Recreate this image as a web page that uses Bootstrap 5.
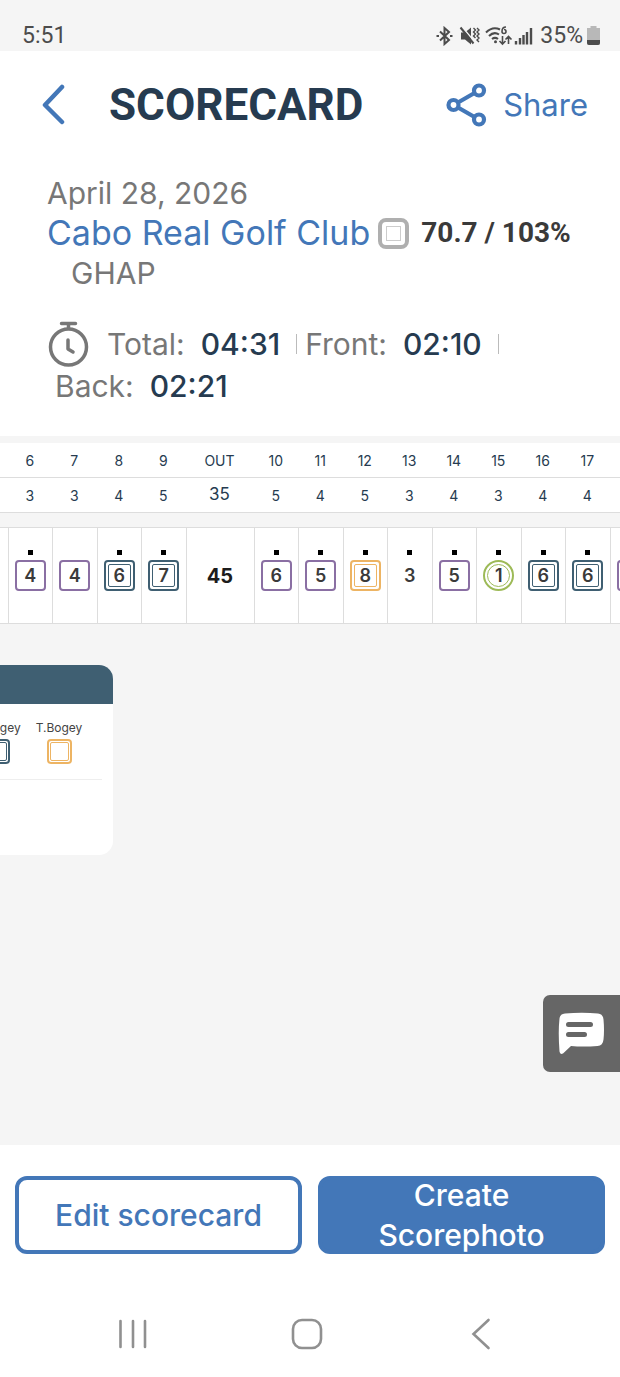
<!DOCTYPE html>
<html lang="en">
<head>
<meta charset="utf-8">
<meta name="viewport" content="width=device-width, initial-scale=1">
<title>Scorecard</title>
<link href="https://cdn.jsdelivr.net/npm/bootstrap@5.3.0/dist/css/bootstrap.min.css" rel="stylesheet">
<style>
:root { --blue:#4377b8; --navy:#263b50; --steel:#3f5f72; --purple:#8a6fa3; --amber:#edb463; --green:#9dba57; --haze:#f5f5f5; }
body { font-family: Inter, "Noto Sans", sans-serif; color: #777; background: #fff; }
svg { display: block; flex: none; }
button { font-family: inherit; }
.status-bar { height: 51px; padding: 20px 20px 0 22px; background: var(--haze); color: #4c4c4c; font: 400 23px/32px Roboto, sans-serif; }
.top-bar { padding: 24px 32px 24px 40px; height: 108px; }
.plain-btn { border: 0; padding: 0; background: none; color: var(--blue); }
.page-title { font: 700 44px/60px Roboto, sans-serif; color: var(--navy); margin: 0 0 0 42px; }
.share { font-size: 31px; line-height: 40px; }
.round-info { padding: 14px 47px 29px; font-size: 30px; line-height: 40px; }
.club { font-size: 34px; color: var(--blue); text-decoration: none; }
.tee { flex: none; width: 31px; height: 31px; border: 4px solid #afafaf; border-radius: 8px; padding: 4px; }
.tee::before { content: ""; display: block; height: 100%; border: 1px solid #ccc; }
.rating { font: 700 28px/40px Roboto, sans-serif; color: #3a3a3a; }
.times { padding-top: 30px; line-height: 42px; }
.times svg { margin: -2px 0; }
.times b { font-weight: 500; color: var(--navy); }
.bar { width: 1px; height: 20px; background: #bbb; }
.scroller { overflow: hidden; background: var(--haze); padding-top: 7px; }
.score-table { table-layout: fixed; width: calc(100% + 71px); margin-left: -37px; border-collapse: separate; border-spacing: 0; text-align: center; color: var(--navy); font-size: 14px; }
.score-table th, .score-table td { padding: 0; font-weight: 400; background: #fff; }
.score-table .total { width: 68px; }
.line-row > * { height: 35px; border-bottom: 1px solid #ddd; }
.line-row .sum { font-size: 17px; }
.score-table .gap-row td { height: 14px; background: var(--haze); }
.score-row > td { height: 97px; border: solid #ddd; border-width: 1px 0 1px 1px; vertical-align: top; }
.score-row .sum { font-size: 20px; font-weight: 700; color: #1c1c1c; vertical-align: middle; }
.dot { width: 5px; height: 5px; margin: 22px auto 5px; }
.dot.on { background: #000; }
.mark-box { display: block; width: 31px; height: 31px; margin: 0 auto; padding: 2px; border: 2px solid transparent; border-radius: 4px; font: 600 18px/21px Inter, sans-serif; color: #3a3a3a; }
.mark-box > span { display: block; height: 100%; border: 1px solid transparent; border-radius: 2px; }
.mark-box.bogey { border-color: var(--purple); }
.mark-box.double, .mark-box.double > span { border-color: var(--steel); }
.mark-box.triple, .mark-box.triple > span { border-color: var(--amber); }
.mark-box.eagle, .mark-box.eagle > span { border-color: var(--green); border-radius: 50%; }
.mark-box.small-box { width: 25px; height: 25px; padding: 1px; }
.board { background: var(--haze); padding-top: 41px; position: relative; }
.legend { width: 113px; height: 190px; border-radius: 0 14px 14px 0; background: #fff; overflow: hidden; }
.legend-head { height: 39px; background: var(--steel); }
.legend-items { margin-right: 11px; padding: 17px 12px 15px 0; border-bottom: 1px solid #eee; font-size: 12px; line-height: 14px; color: #444; }
.legend-items > div { flex: 0 0 62px; text-align: center; }
.legend-items .mark-box { margin-top: 4px; }
.chat { position: absolute; right: 0; bottom: 73px; width: 77px; height: 77px; border: 0; border-radius: 7px 0 0 7px; background: #666; padding: 17px 15px; }
.actions { padding: 31px 15px 0; }
.actions .btn { height: 78px; border: 4px solid var(--blue); border-radius: 12px; padding: 0; font-size: 30px; line-height: 40px; font-weight: 500; color: var(--blue); }
.actions .btn.solid { background: var(--blue); color: #fff; }
.sys-nav { padding: 60px 6px 23px 0; height: 123px; }
.sys-nav button { flex: 0 0 174px; display: flex; justify-content: center; }
</style>
</head>
<body>
<div class="d-flex flex-column min-vh-100">
  <div class="status-bar d-flex align-items-center">
    <span class="me-auto">5:51</span>
    <svg width="100" height="20" viewBox="0 0 100 20" fill="none" stroke="#4c4c4c" stroke-width="2" class="me-1">
      <path d="M4 5.500l9 8.500-4.500 4V2L13 6l-9 8.500M.5 10H3M14 10h2.500"/>
      <path d="M25 6.500h4l6-5v17l-6-5h-4z" fill="#4c4c4c" stroke="none"/>
      <path d="M26.500 1.500l12 14" stroke="#f5f5f5" stroke-width="1.500"/><path d="M24.500 1.500l13 16"/>
      <path d="M37.500 2l2 2-2 2 2 2-2 2 2 2M41 2l2 2-2 2 2 2-2 2 2 2-2 2 2 2" stroke-width="1.400"/>
      <path d="M50 6.500c5-5 10-5 14-3M53 10c3-3 7-3.500 10-1.500M56 13c2-1.500 4-1.500 6 0"/>
      <circle cx="59.500" cy="15.800" r="1.500" fill="#4c4c4c" stroke="none"/>
      <path d="M70 1c-3 0-4 2-4 4.500a2 2 0 1 0 2-2M66.500 10v7.500m-3-2.500l3 3 3-3M72.500 18v-7.500m-3 3l3-3 3 3" stroke-width="1.600"/>
      <path d="M80 15v3.500M84 12v6.500M87.500 9v9.500M91 6v12.500M95 2v16.500" stroke-width="2.400"/>
    </svg>
    <span>35%</span>
    <svg width="13" height="19" viewBox="0 0 13 19" class="ms-1"><path d="M3.500 0h6v2H13v15a2 2 0 0 1-2 2H2a2 2 0 0 1-2-2V2h3.500z" fill="#b8b8b8"/><path d="M0 14h13v3a2 2 0 0 1-2 2H2a2 2 0 0 1-2-2z" fill="#4c4c4c"/></svg>
  </div>

  <header class="top-bar d-flex align-items-center">
    <button class="plain-btn" aria-label="Back"><svg width="27" height="42" viewBox="0 0 27 42"><path d="M22 3L5 21l17 17" fill="none" stroke="#4377b8" stroke-width="4.500" stroke-linecap="round" stroke-linejoin="round"/></svg></button>
    <h1 class="page-title me-auto">SCORECARD</h1>
    <button class="plain-btn share d-flex align-items-center gap-3">
      <svg width="41" height="44" viewBox="0 0 41 44" fill="none" stroke="#4377b8" stroke-width="4.200"><circle cx="7.500" cy="22" r="5"/><circle cx="33" cy="7.500" r="5"/><circle cx="33" cy="36.500" r="5"/><path d="M12 19.500L28.500 10M12 24.500L28.500 34"/></svg>
      <span>Share</span>
    </button>
  </header>

  <section class="round-info">
    <div>April 28, 2026</div>
    <div class="d-flex align-items-center">
      <a href="#" class="club text-nowrap">Cabo Real Golf Club</a>
      <span class="tee ms-2"></span>
      <span class="rating text-nowrap ms-2 ps-1">70.7 / 103%</span>
    </div>
    <div class="ps-4">GHAP</div>
    <div class="times d-flex flex-wrap align-items-center">
      <svg width="44" height="46" viewBox="0 0 44 46" fill="none" stroke="#777" stroke-width="3.500" stroke-linecap="round"><circle cx="21.500" cy="26" r="18"/><path d="M14.500 2.500h14M21.500 3v4M21 19v9l5 3" stroke-linejoin="round"/></svg>
      <span class="ms-3 me-3">Total:</span><b>04:31</b><span class="bar ms-3 me-2"></span>
      <span class="me-3">Front:</span><b>02:10</b><span class="bar ms-3"></span>
      <div class="w-100 ps-2"><span class="me-3">Back:</span><b>02:21</b></div>
    </div>
  </section>

  <div class="scroller">
    <table class="score-table">
      <thead>
        <tr class="line-row"><th></th><th>6</th><th>7</th><th>8</th><th>9</th><th class="total">OUT</th><th>10</th><th>11</th><th>12</th><th>13</th><th>14</th><th>15</th><th>16</th><th>17</th><th></th></tr>
      </thead>
      <tbody>
        <tr class="line-row"><td></td><td>3</td><td>3</td><td>4</td><td>5</td><td class="sum">35</td><td>5</td><td>4</td><td>5</td><td>3</td><td>4</td><td>3</td><td>4</td><td>4</td><td></td></tr>
        <tr class="gap-row"><td colspan="15"></td></tr>
        <tr class="score-row">
          <td></td>
          <td><div class="dot on"></div><span class="mark-box bogey"><span>4</span></span></td>
          <td><div class="dot"></div><span class="mark-box bogey"><span>4</span></span></td>
          <td><div class="dot on"></div><span class="mark-box double"><span>6</span></span></td>
          <td><div class="dot on"></div><span class="mark-box double"><span>7</span></span></td>
          <td class="sum">45</td>
          <td><div class="dot on"></div><span class="mark-box bogey"><span>6</span></span></td>
          <td><div class="dot on"></div><span class="mark-box bogey"><span>5</span></span></td>
          <td><div class="dot on"></div><span class="mark-box triple"><span>8</span></span></td>
          <td><div class="dot on"></div><span class="mark-box"><span>3</span></span></td>
          <td><div class="dot on"></div><span class="mark-box bogey"><span>5</span></span></td>
          <td><div class="dot on"></div><span class="mark-box eagle"><span>1</span></span></td>
          <td><div class="dot on"></div><span class="mark-box double"><span>6</span></span></td>
          <td><div class="dot on"></div><span class="mark-box double"><span>6</span></span></td>
          <td><div class="dot"></div><span class="mark-box bogey"><span></span></span></td>
        </tr>
      </tbody>
    </table>
  </div>

  <main class="board flex-grow-1">
    <div class="legend">
      <div class="legend-head"></div>
      <div class="legend-items d-flex justify-content-end">
        <div>D.Bogey<span class="mark-box small-box double"><span></span></span></div>
        <div>T.Bogey<span class="mark-box small-box triple"><span></span></span></div>
      </div>
    </div>
    <button class="chat" aria-label="Chat"><svg width="47" height="43" viewBox="0 0 47 43"><path d="M7 1.500Q24 0 40 1.500q5 .5 5.500 6 1 11 0 20-.5 6-6 6.500Q25 35 13 34L5 41.500q-3 1.500-3.500-2Q0 20 1.500 6.500 2 2 7 1.500z" fill="#fff"/><path d="M10.500 12.500h22M10.500 22.500h16" stroke="#666" stroke-width="5" stroke-linecap="round"/></svg></button>
  </main>

  <div class="actions d-flex gap-3">
    <button class="btn w-50">Edit scorecard</button>
    <button class="btn solid w-50 d-flex align-items-center justify-content-center">Create<br>Scorephoto</button>
  </div>
  <nav class="sys-nav d-flex justify-content-center" aria-label="System">
    <button class="plain-btn" aria-label="Recent apps"><svg width="30" height="40" viewBox="0 0 30 40"><path d="M2.500 7v26M15 7v26M27 7v26" stroke="#909090" stroke-width="2.600" stroke-linecap="round"/></svg></button>
    <button class="plain-btn" aria-label="Home"><svg width="32" height="40" viewBox="0 0 32 40"><rect x="2" y="6" width="28" height="28" rx="9" fill="none" stroke="#909090" stroke-width="2.600"/></svg></button>
    <button class="plain-btn" aria-label="Back"><svg width="20" height="40" viewBox="0 0 20 40"><path d="M17.500 6L2.500 20l15 14" fill="none" stroke="#909090" stroke-width="2.600" stroke-linecap="round"/></svg></button>
  </nav>
</div>
<script src="https://cdn.jsdelivr.net/npm/bootstrap@5.3.0/dist/js/bootstrap.bundle.min.js"></script>
</body>
</html>
